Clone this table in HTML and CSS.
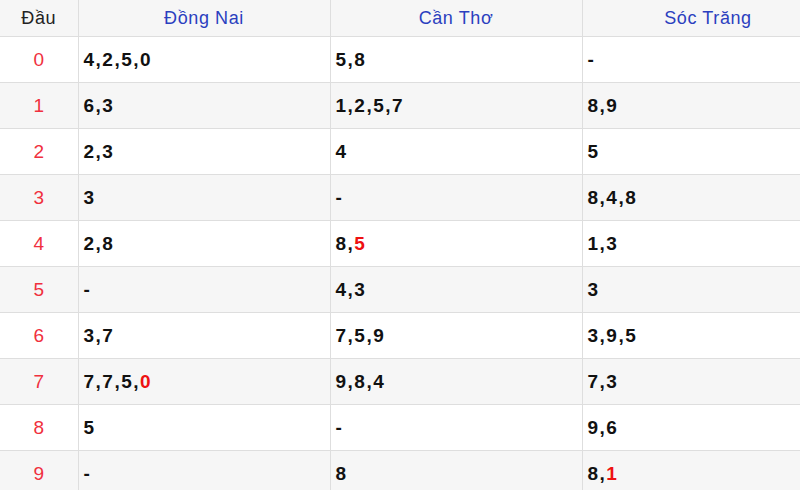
FILE: index.html
```html
<!DOCTYPE html>
<html lang="vi">
<head>
<meta charset="utf-8">
<title>Lô tô đầu</title>
<link rel="stylesheet" href="styles.css">
</head>
<body>
<div class="frame">
<table class="loto">
  <colgroup>
    <col class="c-head">
    <col class="c-prov">
    <col class="c-prov">
    <col class="c-prov">
  </colgroup>
  <thead>
    <tr>
      <th class="dau">Đầu</th>
      <th>Đồng Nai</th>
      <th>Cần Thơ</th>
      <th>Sóc Trăng</th>
    </tr>
  </thead>
  <tbody>
    <tr><td class="num">0</td><td>4,2,5,0</td><td>5,8</td><td>-</td></tr>
    <tr><td class="num">1</td><td>6,3</td><td>1,2,5,7</td><td>8,9</td></tr>
    <tr><td class="num">2</td><td>2,3</td><td>4</td><td>5</td></tr>
    <tr><td class="num">3</td><td>3</td><td>-</td><td>8,4,8</td></tr>
    <tr><td class="num">4</td><td>2,8</td><td>8,<span class="hl">5</span></td><td>1,3</td></tr>
    <tr><td class="num">5</td><td>-</td><td>4,3</td><td>3</td></tr>
    <tr><td class="num">6</td><td>3,7</td><td>7,5,9</td><td>3,9,5</td></tr>
    <tr><td class="num">7</td><td>7,7,5,<span class="hl">0</span></td><td>9,8,4</td><td>7,3</td></tr>
    <tr><td class="num">8</td><td>5</td><td>-</td><td>9,6</td></tr>
    <tr><td class="num">9</td><td>-</td><td>8</td><td>8,<span class="hl">1</span></td></tr>
  </tbody>
</table>
</div>
</body>
</html>
```
FILE: styles.css
```css
html, body {
  margin: 0;
  padding: 0;
  background: #ffffff;
}

.frame {
  width: 800px;
  height: 490px;
  overflow: hidden;
}

.loto {
  border-collapse: collapse;
  table-layout: fixed;
  width: 834px;
  font-family: "Liberation Sans", Arial, sans-serif;
  color: #111111;
}

.c-head { width: 78px; }
.c-prov { width: 252px; }

.loto th,
.loto td {
  border: 1px solid #dedede;
  padding: 0 5px;
}

.loto tr > :first-child { border-left: none; }
.loto thead th { border-top: none; }

.loto th {
  height: 36px;
  font-size: 18px;
  font-weight: normal;
  letter-spacing: 0.6px;
  color: #2b3fbf;
  background: #f6f6f6;
  text-align: center;
  vertical-align: middle;
}

.loto th.dau {
  color: #222222;
}

.loto td {
  height: 45px;
  font-size: 19px;
  font-weight: bold;
  letter-spacing: 1.5px;
  text-align: left;
  vertical-align: middle;
}

.loto td.num {
  text-align: center;
  font-weight: normal;
  color: #f0303e;
  letter-spacing: 0;
}

.loto tbody tr:nth-child(even) {
  background: #f6f6f6;
}

.hl {
  color: #ee1111;
}
```
